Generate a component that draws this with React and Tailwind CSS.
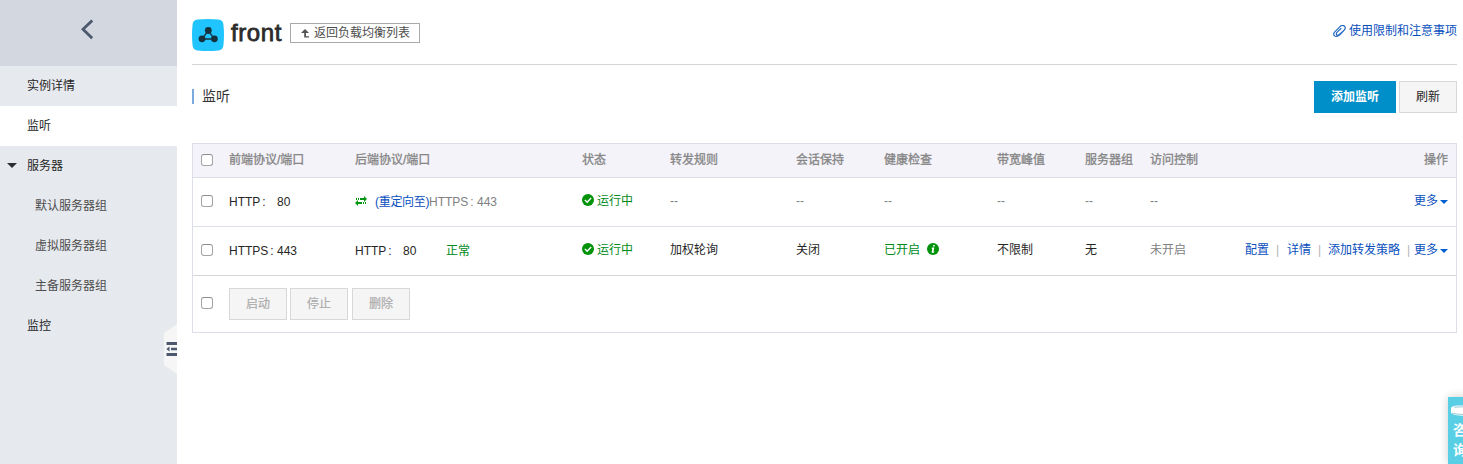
const COLS =
  "grid grid-cols-[36px_126px_227px_88px_126px_88px_113px_88px_65px_1fr]";

function Checkbox() {
  return (
    <input
      type="checkbox"
      className="block size-3 appearance-none rounded-[3px] border border-[#a3a3a3] border-t-[#8c8c8c] bg-white"
    />
  );
}

function CheckCell() {
  return (
    <div className="flex items-center pl-2">
      <Checkbox />
    </div>
  );
}

function Running() {
  return (
    <div className="flex items-center gap-[3px] text-[#008a17]">
      <svg className="mb-0.5 size-3" viewBox="0 0 12 12">
        <circle cx="6" cy="6" r="6" fill="#00930a" />
        <path d="M2.9 6.1 5.2 8.2 9.1 4.1" fill="none" stroke="#fff" strokeWidth="1.4" />
      </svg>
      运行中
    </div>
  );
}

function Endpoint({ protocol, port }) {
  return (
    <span className="flex">
      <span className="w-12">
        {protocol}
        <span className="pl-[2px]">:</span>
      </span>
      <span>{port}</span>
    </span>
  );
}

function More() {
  return (
    <span className="flex items-center gap-[2px]">
      更多
      <svg className="mt-0.5 h-1 w-2" viewBox="0 0 8 4">
        <path d="M0 0h8L4 4z" fill="#0060cf" />
      </svg>
    </span>
  );
}

function Bar() {
  return <span className="text-[#b4b4b4]">|</span>;
}

function SideItem({ children, active, sub, open }) {
  return (
    <div
      className={
        "flex h-10 items-center " +
        (active ? "bg-white " : "") +
        (sub ? "pl-[35px] text-[#4d4d4d]" : open ? "pl-[7px] text-[#262626]" : "pl-[27px] text-[#262626]")
      }
    >
      {open && (
        <svg className="mr-2.5 mb-0.5 h-[5px] w-2.5" viewBox="0 0 10 5">
          <path d="M0 0h10L5 5z" fill="#2b2d30" />
        </svg>
      )}
      {children}
    </div>
  );
}

function Sidebar() {
  return (
    <aside className="relative h-[464px] w-[177px] shrink-0 bg-[#e6e9ee]">
      <div className="flex h-[66px] items-start justify-center bg-[#d3d7e0] pt-[19px] pr-[3px]">
        <svg className="h-[21px] w-3" viewBox="0 0 12 21">
          <path d="M11.2 1.5 2 10.3l9.2 8.9" fill="none" stroke="#4b586e" strokeWidth="2.8" />
        </svg>
      </div>
      <SideItem>实例详情</SideItem>
      <SideItem active>监听</SideItem>
      <SideItem open>服务器</SideItem>
      <SideItem sub>默认服务器组</SideItem>
      <SideItem sub>虚拟服务器组</SideItem>
      <SideItem sub>主备服务器组</SideItem>
      <SideItem>监控</SideItem>
      <svg className="absolute top-[324px] right-0 h-[50px] w-[13px]" viewBox="0 0 13 50">
        <path d="M13 0 0 9v32l13 9z" fill="#f6f6f6" />
        <path d="M2.5 18H13v3H2.5zM7 23.7h6v2.6H7zM2.5 29H13v3H2.5z" fill="#4b586e" />
        <path d="M5.5 22.5v5L2.3 25z" fill="#4b586e" />
      </svg>
    </aside>
  );
}

function Header() {
  return (
    <header className="flex h-[65px] items-start border-b border-[#d5d5d5]">
      <svg className="mt-[19px] size-8" viewBox="0 0 32 32">
        <path d="M5.5.6Q16-.6 26.5.6 31 1 31.4 5.5 32.6 16 31.4 26.5 31 31 26.5 31.4 16 32.6 5.5 31.4 1 31 .6 26.5-.6 16 .6 5.5 1 1 5.5.6Z" fill="#20c4ff" />
        <path d="M16.3 11.5 10 20h12.5z" fill="none" stroke="#16323f" strokeWidth="1.3" />
        <circle cx="16.3" cy="11.5" r="3.4" fill="#16323f" />
        <circle cx="10" cy="19.8" r="3.4" fill="#16323f" />
        <circle cx="22.4" cy="19.8" r="3.4" fill="#16323f" />
      </svg>
      <h1 className="mt-[19px] ml-[7px] w-[59px] text-2xl leading-7 tracking-[0.6px] text-[#2b2b2b] [-webkit-text-stroke:0.8px_#2b2b2b]">
        front
      </h1>
      <button className="mt-[23px] flex h-5 w-[130px] items-center border border-[#a9a9a9] pl-2.5 text-[#4d4d4d]">
        <svg className="mt-px mr-[5px] h-[9px] w-2" viewBox="0 0 8 9">
          <path d="M4 0 8 4H5v3.2h3v1.4H3.2V4H0z" fill="#555" />
        </svg>
        <span>返回负载均衡列表</span>
      </button>
      <a className="mt-[22px] ml-auto flex items-center gap-[3px] text-[#0a50bd]">
        <svg className="mb-px h-3 w-[13px]" viewBox="0 0 13 12" fill="none" stroke="#2468c0" strokeWidth="1.2">
          <path d="M10.8 5.7 7 9.6C5.4 11.2 3.5 11.9 1.8 11 .2 10.1.3 8.3 1.8 6.8L6.7 1.9C8.3.3 10.3.2 11.5 1.2c1.3 1.2.9 2.7-.4 4L6.7 9.3C5.7 10.2 4.4 10.5 3.7 9.8 3 9.1 3.3 8 4.2 7.1L8.3 3.3" />
        </svg>
        使用限制和注意事项
      </a>
    </header>
  );
}

function DashRow() {
  return (
    <div className={COLS + " h-[49px] items-center border-b border-[#dcdfe8] pb-0.5 text-[#808080]"}>
      <CheckCell />
      <div className="pt-0.5 text-[#262626]">
        <Endpoint protocol="HTTP" port="80" />
      </div>
      <div className="flex items-center pt-0.5">
        <svg className="mr-2 mb-0.5 h-2.5 w-3" viewBox="0 0 12 10" fill="#009612">
          <path d="M1 2h1v2H1zM3 2h1v2H3zM5 2h4V0l3 3-3 3V4H5z" />
          <path d="M11 6h-1v2h1zM9 6H8v2h1zM7 6H3V4L0 7l3 3V8h4z" />
        </svg>
        <span className="w-[54px] tracking-[-0.3px] text-[#0a50bd]">(重定向至)</span>
        <Endpoint protocol="HTTPS" port="443" />
      </div>
      <Running />
      <div>--</div>
      <div>--</div>
      <div>--</div>
      <div>--</div>
      <div>--</div>
      <div className="flex justify-between">
        <span>--</span>
        <span className="pr-2 text-[#0a50bd]">
          <More />
        </span>
      </div>
    </div>
  );
}

function DetailRow() {
  return (
    <div className={COLS + " h-[49px] items-center border-b border-[#d4d6d9] pb-0.5 text-[#262626]"}>
      <CheckCell />
      <div className="pt-0.5">
        <Endpoint protocol="HTTPS" port="443" />
      </div>
      <div className="flex pt-0.5">
        <span className="w-[91px]">
          <Endpoint protocol="HTTP" port="80" />
        </span>
        <span className="text-[#008a17]">正常</span>
      </div>
      <Running />
      <div>加权轮询</div>
      <div>关闭</div>
      <div className="flex items-center gap-[7px] text-[#008a17]">
        已开启
        <svg className="mb-0.5 size-3" viewBox="0 0 12 12">
          <circle cx="6" cy="6" r="6" fill="#00930a" />
          <path d="M6.3 2.1h1.6L7.5 3.6H5.9zM4.9 4.5h2.5L6.5 8.6h.8l-.4 1.1H4.5l.8-4h-.7z" fill="#fff" />
        </svg>
      </div>
      <div>不限制</div>
      <div>无</div>
      <div className="flex justify-between">
        <span className="text-[#808080]">未开启</span>
        <span className="flex pr-2 text-[#0a50bd]">
          配置
          <span className="w-[18px] pl-[7px]"><Bar /></span>
          详情
          <span className="w-[17px] pl-[7px]"><Bar /></span>
          添加转发策略
          <span className="w-[14px] pl-[7px]"><Bar /></span>
          <More />
        </span>
      </div>
    </div>
  );
}

const HEADERS = [
  "前端协议/端口",
  "后端协议/端口",
  "状态",
  "转发规则",
  "会话保持",
  "健康检查",
  "带宽峰值",
  "服务器组",
];

export default function App() {
  return (
    <div className="relative flex h-[464px] w-[1463px] overflow-hidden bg-white font-['Liberation_Sans','Noto_Sans_CJK_SC',sans-serif] text-xs leading-[18px] whitespace-nowrap">
      <Sidebar />
      <main className="ml-[15px] w-[1265px]">
        <Header />
        <div className="flex h-[78px] items-start pt-4">
          <h2 className="mt-2 h-[15px] border-l-2 border-[#7aaade] pl-2 text-sm leading-[15px] text-[#333]">监听</h2>
          <button className="ml-auto h-8 w-[82px] bg-[#008fc9] pb-px font-bold text-white">添加监听</button>
          <button className="ml-[3px] h-8 w-[58px] border border-[#d8d8d8] bg-[#f5f5f5] pb-px text-[#262626]">刷新</button>
        </div>
        <section className="h-[190px] border border-[#dcdfe8]">
          <div className={COLS + " h-[34px] items-center border-b border-[#dcdfe8] bg-[#f4f3f9] pb-px text-[#858585] [-webkit-text-stroke:0.3px_#858585]"}>
            <CheckCell />
            {HEADERS.map((h) => (
              <div key={h} className="pb-px">{h}</div>
            ))}
            <div className="flex justify-between pr-2 pb-px">
              <span>访问控制</span>
              <span>操作</span>
            </div>
          </div>
          <DashRow />
          <DetailRow />
          <div className="flex h-14 items-center pb-px">
            <div className="w-9 pb-0.5 pl-2">
              <Checkbox />
            </div>
            <div className="flex text-[#acacac] [-webkit-text-stroke:0.2px_#acacac]">
              <button className="h-8 w-[58px] border border-[#d8d8d8] bg-[#f5f5f5]">启动</button>
              <button className="ml-[3px] h-8 w-[58px] border border-[#d8d8d8] bg-[#f5f5f5]">停止</button>
              <button className="ml-1 h-8 w-[58px] border border-[#d8d8d8] bg-[#f5f5f5]">删除</button>
            </div>
          </div>
        </section>
      </main>
      <div className="absolute top-[397px] left-[1448px] h-[67px] w-[30px] bg-[#59cfe5] pt-2 pl-[3px] text-sm leading-5 font-bold text-white shadow-[0_0_10px_rgba(0,0,0,0.2)]">
        <svg className="mb-[3px] block h-3 w-6" viewBox="0 0 24 12">
          <path d="M0 3.5Q0 1 7 .6h10q7 .4 7 2.9v4.5q-3 2.8-12 2.8T0 8z" fill="#fff" />
          <path d="M1 8Q6 9.5 12 9.5T23 8M3 2.2Q10 1.4 20 2.2" fill="none" stroke="#8bc5d5" strokeWidth=".9" />
        </svg>
        <div className="pl-[2px]">咨</div>
        <div className="pl-[2px]">询</div>
      </div>
    </div>
  );
}
